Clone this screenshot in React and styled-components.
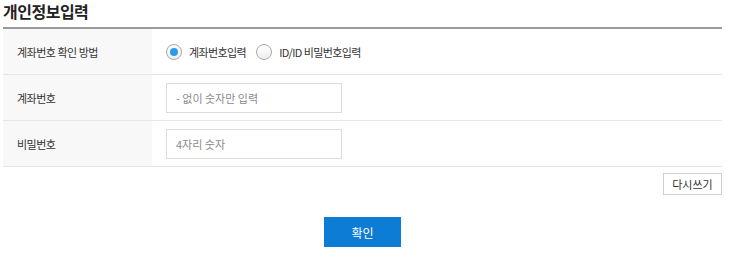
import styled, { createGlobalStyle } from "styled-components"

const GlobalStyle = createGlobalStyle`
body {
  margin: 0;
  background: #fff;
  font-family: "Noto Sans CJK KR", "Noto Sans", sans-serif;
}
`;

const Page = styled.div`
width: 719px;
margin-left: 3px;
`;

const Title = styled.h2`
margin: 0;
height: 27px;
font-size: 16px;
line-height: 22px;
font-weight: bold;
color: #222;
letter-spacing: -0.5px;
border-bottom: 2px solid #9a9a9a;
box-sizing: content-box;
`;

const Row = styled.div`
display: grid;
grid-template-columns: 149px 1fr;
height: 45px;
border-bottom: 1px solid #e6e6e6;
`;

const Label = styled.div`
display: flex;
align-items: center;
padding-left: 14px;
background: #f8f8f8;
font-size: 11px;
color: #333;
letter-spacing: -0.5px;
`;

const Value = styled.div`
display: flex;
align-items: center;
gap: 10px;
padding-left: 14px;
`;

const RadioLabel = styled.label`
display: flex;
align-items: center;
gap: 7px;
font-size: 11px;
color: #333;
letter-spacing: -0.6px;
`;

const RadioCircle = styled.span`
width: 14px;
height: 14px;
border-radius: 50%;
border: 1px solid #a8a8a8;
background: linear-gradient(#fff, #eee);
display: flex;
align-items: center;
justify-content: center;

&::after {
  content: "";
  width: 8px;
  height: 8px;
  border-radius: 50%;
  background: ${(p) => (p.checked ? "#2f9ae6" : "transparent")};
}
`;

const TextInput = styled.input`
width: 176px;
height: 30px;
box-sizing: border-box;
border: 1px solid #dcdcdc;
padding: 0 9px;
font-family: inherit;
font-size: 11px;
color: #333;
outline: none;

&::placeholder {
  color: #8a8a8a;
}
`;

const Actions = styled.div`
display: flex;
justify-content: flex-end;
margin-top: 6px;
`;

const ResetButton = styled.button`
width: 59px;
height: 22px;
border: 1px solid #cfcfcf;
background: #fff;
font-family: inherit;
font-size: 11px;
color: #333;
padding: 0;
`;

const Submit = styled.div`
display: flex;
justify-content: center;
margin-top: 22px;
`;

const SubmitButton = styled.button`
width: 77px;
height: 30px;
border: none;
background: #0c7cd5;
color: #fff;
font-family: inherit;
font-size: 12px;
padding: 0;
`;

const App = () => {
    return (
        <Page>
            <GlobalStyle />
            <Title>개인정보입력</Title>
            <Row>
                <Label>계좌번호 확인 방법</Label>
                <Value>
                    <RadioLabel><RadioCircle checked />계좌번호입력</RadioLabel>
                    <RadioLabel><RadioCircle />ID/ID 비밀번호입력</RadioLabel>
                </Value>
            </Row>
            <Row>
                <Label>계좌번호</Label>
                <Value><TextInput placeholder="- 없이 숫자만 입력" /></Value>
            </Row>
            <Row>
                <Label>비밀번호</Label>
                <Value><TextInput placeholder="4자리 숫자" /></Value>
            </Row>
            <Actions>
                <ResetButton>다시쓰기</ResetButton>
            </Actions>
            <Submit>
                <SubmitButton>확인</SubmitButton>
            </Submit>
        </Page>
    )
}

export default App;
